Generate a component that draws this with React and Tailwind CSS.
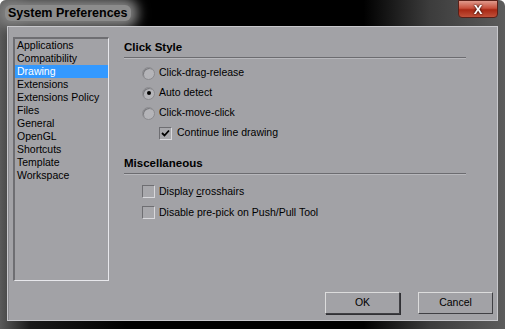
import React, { useState } from "react";

const items = [
  "Applications",
  "Compatibility",
  "Drawing",
  "Extensions",
  "Extensions Policy",
  "Files",
  "General",
  "OpenGL",
  "Shortcuts",
  "Template",
  "Workspace",
];

const Radio = ({ checked }) => (
  <span className="w-[13px] h-[13px] rounded-full border border-[#8a8a8e] bg-[#b4b4b8] flex items-center justify-center shadow-[inset_1px_1px_0_#7a7a7e]">
    {checked && <span className="w-[4px] h-[4px] rounded-full bg-black" />}
  </span>
);

const Check = ({ checked }) => (
  <span className="w-[13px] h-[13px] border border-t-[#6e6e72] border-l-[#6e6e72] border-r-[#d8d8dc] border-b-[#d8d8dc] bg-[#a8a8ac] flex items-center justify-center">
    {checked && (
      <svg width="9" height="9" viewBox="0 0 9 9">
        <path d="M1 4 L3.5 6.5 L8 1.5" stroke="#000" strokeWidth="1.8" fill="none" />
      </svg>
    )}
  </span>
);

const Header = ({ children }) => (
  <>
    <div className="h-[14px] leading-[14px] text-[11.5px] font-bold text-black">{children}</div>
    <div className="mt-[3px] h-[2px] border-t border-t-[#6c6c70] border-b border-b-[#b8b8bc]" />
  </>
);

const Button = ({ children, primary }) => (
  <button
    className={
      "w-[75px] h-[22px] text-[10.5px] text-black bg-[#a2a2a6] border border-t-[#dcdcdc] border-l-[#dcdcdc] border-r-[#404044] border-b-[#404044] " +
      (primary ? "shadow-[1px_1px_0_#303034]" : "")
    }
  >
    {children}
  </button>
);

export default function App() {
  const [selected, setSelected] = useState("Drawing");
  const [style, setStyle] = useState("auto");

  return (
    <div
      className="w-[505px] h-[329px] rounded-t-[6px] bg-[linear-gradient(to_right,#5a5a5a_0%,#1a1a1a_6%,#000_25%,#000_72%,#3c3c3c_85%,#5c5c5c_100%)] flex flex-col overflow-hidden"
      style={{ fontFamily: '"Liberation Sans", Arial, sans-serif' }}
    >
      {/* title bar */}
      <div className="h-[26px] flex items-start justify-between pl-[8px] pr-[7px]">
        <span className="mt-[5px] text-[12.5px] font-bold text-black leading-[16px] bg-[#8c8c8c] rounded-[6px] px-[3px] -ml-[3px] shadow-[0_0_12px_7px_#848484]">
          System Preferences
        </span>
        <div className="w-[40px] h-[18px] rounded-b-[4px] border border-[#5a2018] bg-[linear-gradient(to_bottom,#e09a8c_0%,#c8503c_45%,#a82814_55%,#c0503a_100%)] flex items-center justify-center">
          <span className="text-white font-bold text-[13px] leading-none drop-shadow-[0_0_1px_#000]">X</span>
        </div>
      </div>

      {/* client area */}
      <div className="mx-[7px] border border-[#c8c8cc] bg-black">
        <div className="h-[293px] bg-[#a2a2a6] border-l border-[#8a8a8e] flex flex-col pt-[10px] pb-[6px]">
          <div className="flex h-[244px]">
            <div className="ml-[4px] w-[96px] h-[244px] border-l-2 border-t-2 border-l-[#6e6e72] border-t-[#6e6e72] border-r border-b border-r-[#e8e8ec] border-b-[#e8e8ec]">
              {items.map((it) => (
                <div
                  key={it}
                  onClick={() => setSelected(it)}
                  className={
                    "h-[13px] leading-[13px] text-[10.5px] pl-[2px] whitespace-nowrap " +
                    (selected === it ? "bg-[#3399ff] text-white" : "text-black")
                  }
                >
                  {it}
                </div>
              ))}
            </div>

            <div className="ml-[15px] w-[342px] pt-[3px] flex flex-col text-[10.5px] text-black">
              <Header>Click Style</Header>
              <div className="mt-[4px] ml-[18px] flex flex-col">
                {[
                  ["drag", "Click-drag-release"],
                  ["auto", "Auto detect"],
                  ["move", "Click-move-click"],
                ].map(([k, label]) => (
                  <div key={k} className="h-[20px] flex items-center gap-[4px]" onClick={() => setStyle(k)}>
                    <Radio checked={style === k} />
                    <span>{label}</span>
                  </div>
                ))}
                <div className="h-[20px] flex items-center gap-[5px] ml-[17px]">
                  <Check checked />
                  <span>Continue line drawing</span>
                </div>
              </div>

              <div className="mt-[13px]">
                <Header>Miscellaneous</Header>
              </div>
              <div className="mt-[6px] ml-[18px] flex flex-col">
                <div className="h-[21px] flex items-center gap-[4px]">
                  <Check />
                  <span>
                    Display <u>c</u>rosshairs
                  </span>
                </div>
                <div className="h-[21px] flex items-center gap-[4px]">
                  <Check />
                  <span>Disable pre-pick on Push/Pull Tool</span>
                </div>
              </div>
            </div>
          </div>

          <div className="mt-[11px] flex justify-end gap-[18px] pr-[4px]">
            <Button primary>OK</Button>
            <Button>Cancel</Button>
          </div>
        </div>
      </div>
      <div className="flex-1" />
    </div>
  );
}
